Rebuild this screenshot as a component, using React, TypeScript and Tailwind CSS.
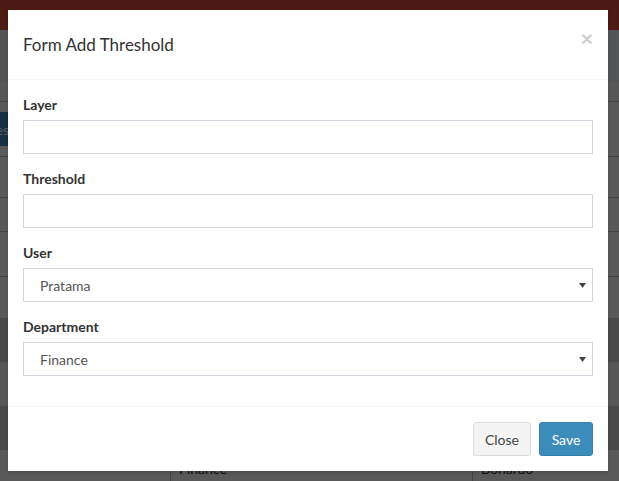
const LABEL_CLS = "block text-[14px] leading-[20px] font-bold text-[#333] mb-[5px]";
const INPUT_CLS = "block w-full h-[34px] border border-[#d2d6de] bg-white px-3 text-[14px] text-[#555] outline-none";

function Arrow() {
  return (
    <svg width="7" height="5" viewBox="0 0 7 5" className="absolute right-[7px] top-[15px] pointer-events-none">
      <polygon points="0,0 7,0 3.5,5" fill="#444" />
    </svg>
  );
}

function Field({ label, children }: { label: string; children: React.ReactNode }) {
  return (
    <div className="mb-[15px]">
      <label className={LABEL_CLS}>{label}</label>
      {children}
    </div>
  );
}

export default function App() {
  return (
    <div className="relative h-[481px] w-[619px] overflow-hidden bg-[#ecf0f5] font-['Lato',sans-serif] text-[14px]">

      {/* page behind the modal */}
      <div className="h-[30px] bg-[#dd4b39]" />
      <div className="h-[52px]" />
      <div className="bg-white">
        <div className="h-[20px] bg-[#f9f9f9] border-b border-[#c4c4c4]" />
        <div className="h-[55px] border-b border-[#c4c4c4] flex items-center">
          <button className="ml-[-36px] h-[34px] px-3 bg-[#3c8dbc] text-white rounded-[3px] whitespace-nowrap">Rules</button>
        </div>
        <div className="h-[41px] border-b border-[#c4c4c4]" />
        <div className="h-[34px] border-b border-[#c4c4c4]" />
        <div className="h-[45px] border-b border-[#c4c4c4]" />
        <div className="h-[41px]" />
        <div className="h-[44px] bg-[#d4d4d4]" />
        <div className="h-[44px] bg-[#f9f9f9]" />
        <div className="h-[44px] bg-[#d4d4d4]" />
        <div className="flex h-[40px] text-[#333]">
          <div className="w-[170px]" />
          <div className="w-[302px] border-l border-[#c4c4c4] pl-2 pt-[8px]">Finance</div>
          <div className="flex-1 border-l border-[#c4c4c4] pl-2 pt-[8px]">Bonardo</div>
        </div>
      </div>

      {/* backdrop */}
      <div className="absolute inset-0 bg-black/65" />

      {/* modal */}
      <div className="absolute top-[10px] left-[8px] w-[600px] bg-white shadow-[0_2px_3px_rgba(0,0,0,0.125)]">
        <div className="relative h-[70px] flex items-center px-[15px] border-b border-[#f4f4f4]">
          <h4 className="text-[17px] text-[#333] leading-[26px]">Form Add Threshold</h4>
          <button className="absolute right-[15px] top-[18px] text-[21px] font-bold leading-none text-black/20 font-['Liberation_Sans',sans-serif]">×</button>
        </div>

        <div className="px-[15px] pt-[15px] pb-[15px]">
          <Field label="Layer">
            <input type="text" className={INPUT_CLS} />
          </Field>
          <Field label="Threshold">
            <input type="text" className={INPUT_CLS} />
          </Field>
          <Field label="User">
            <div className="relative">
              <select className={INPUT_CLS + ' appearance-none pl-[16px]'} defaultValue="Pratama">
                <option>Pratama</option>
              </select>
              <Arrow />
            </div>
          </Field>
          <Field label="Department">
            <div className="relative">
              <select className={INPUT_CLS + ' appearance-none pl-[16px]'} defaultValue="Finance">
                <option>Finance</option>
              </select>
              <Arrow />
            </div>
          </Field>
        </div>

        <div className="flex justify-end gap-[8px] p-[15px] border-t border-[#f4f4f4]">
          <button className="w-[58px] h-[34px] rounded-[3px] bg-[#f4f4f4] border border-[#ddd] text-[#444]">Close</button>
          <button className="w-[54px] h-[34px] rounded-[3px] bg-[#3c8dbc] border border-[#367fa9] text-white">Save</button>
        </div>
      </div>
    </div>
  );
}
